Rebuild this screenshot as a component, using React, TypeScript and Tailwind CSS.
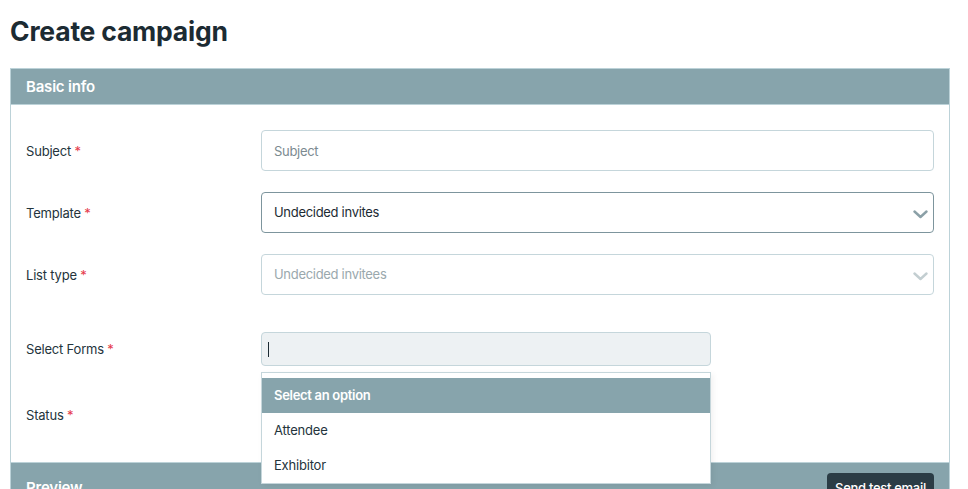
function Label({ text }: { text: string }) {
  return (
    <div className="w-[235px] shrink-0 pt-[2px] text-[13px] tracking-[-0.2px] text-[#24343c]">
      {text} <span className="text-[#e5394a]">*</span>
    </div>
  );
}

function Chevron({ color }: { color: string }) {
  return (
    <svg width="15" height="9" viewBox="0 0 15 9" fill="none" className={color}>
      <path d="M1.5 1.5 L7.5 7 L13.5 1.5" stroke="currentColor" strokeWidth="2.4" strokeLinecap="round" strokeLinejoin="round" />
    </svg>
  );
}

export default function App() {
  return (
    <div
      className="min-h-screen bg-white px-[10px] pt-[14px]"
      style={{ fontFamily: "Inter, 'Noto Sans', sans-serif" }}
    >
      <h1 className="mb-[20px] text-[26.5px] font-bold leading-[34px] tracking-[-0.2px] text-[#1c2b33]">
        Create campaign
      </h1>

      <div className="w-[940px] border border-[#bcd2d8]">
        <div className="flex h-[35px] items-center bg-[#87a4ac] px-[15px] pt-[2px] text-[15px] font-semibold tracking-[-0.2px] text-white">
          Basic info
        </div>

        <div className="border-t border-[#bcd2d8] pb-[30px] pl-[15px] pr-[15px] pt-[25px]">
          <div className="flex h-[41px] items-center">
            <Label text="Subject" />
            <div className="flex h-full flex-1 items-center rounded-[4px] border border-[#c5d6db] px-3 pt-[2px] text-[13px] tracking-[-0.3px] text-[#7c8a90]">
              Subject
            </div>
          </div>

          <div className="mt-[21px] flex h-[41px] items-center">
            <Label text="Template" />
            <div className="flex h-full flex-1 items-center justify-between rounded-[4px] border border-[#7d959d] pl-3 pr-[5px] text-[13px] tracking-[-0.3px] text-[#1c2b33]">
              <span>Undecided invites</span>
              <span className="pt-[3px]">
                <Chevron color="text-[#8ba0a7]" />
              </span>
            </div>
          </div>

          <div className="mt-[21px] flex h-[41px] items-center">
            <Label text="List type" />
            <div className="flex h-full flex-1 items-center justify-between rounded-[4px] border border-[#c5d6db] pl-3 pr-[5px] text-[13px] tracking-[-0.3px] text-[#9aa8ad]">
              <span>Undecided invitees</span>
              <span className="pt-[3px]">
                <Chevron color="text-[#c3ced1]" />
              </span>
            </div>
          </div>

          <div className="mt-[37px] flex h-[34px] items-center">
            <Label text="Select Forms" />
            <div className="relative h-full w-[450px]">
              <div className="flex h-full items-center rounded-[4px] border border-[#c5d6db] bg-[#edf1f3] pl-[6px]">
                <span className="h-[15px] w-px bg-[#1c2b33]" />
              </div>
              <div className="absolute left-0 top-[40px] z-10 w-[450px] border border-[#c5d6db] bg-white pt-[5px] shadow-[2px_2px_6px_rgba(0,0,0,0.06)]">
                <div className="flex h-[35px] items-center bg-[#87a4ac] px-3 text-[13px] font-semibold tracking-[-0.3px] text-white">
                  Select an option
                </div>
                <div className="flex h-[35px] items-center px-3 text-[13px] tracking-[-0.2px] text-[#24343c]">
                  Attendee
                </div>
                <div className="flex h-[35px] items-center px-3 text-[13px] tracking-[-0.2px] text-[#24343c]">
                  Exhibitor
                </div>
              </div>
            </div>
          </div>

          <div className="mt-[32px] flex h-[34px] items-center">
            <Label text="Status" />
            <div className="h-full w-[450px]" />
          </div>
        </div>

        <div className="flex h-[40px] items-center justify-between border-t border-[#bcd2d8] bg-[#87a4ac] pl-[15px] pr-[15px] pt-[12px]">
          <span className="text-[15px] font-semibold tracking-[-0.2px] text-white">Preview</span>
          <button className="w-[107px] rounded-[4px] bg-[#2b3c45] py-[6px] text-center text-[13px] font-medium tracking-[-0.3px] text-white">
            Send test email
          </button>
        </div>
      </div>
    </div>
  );
}
